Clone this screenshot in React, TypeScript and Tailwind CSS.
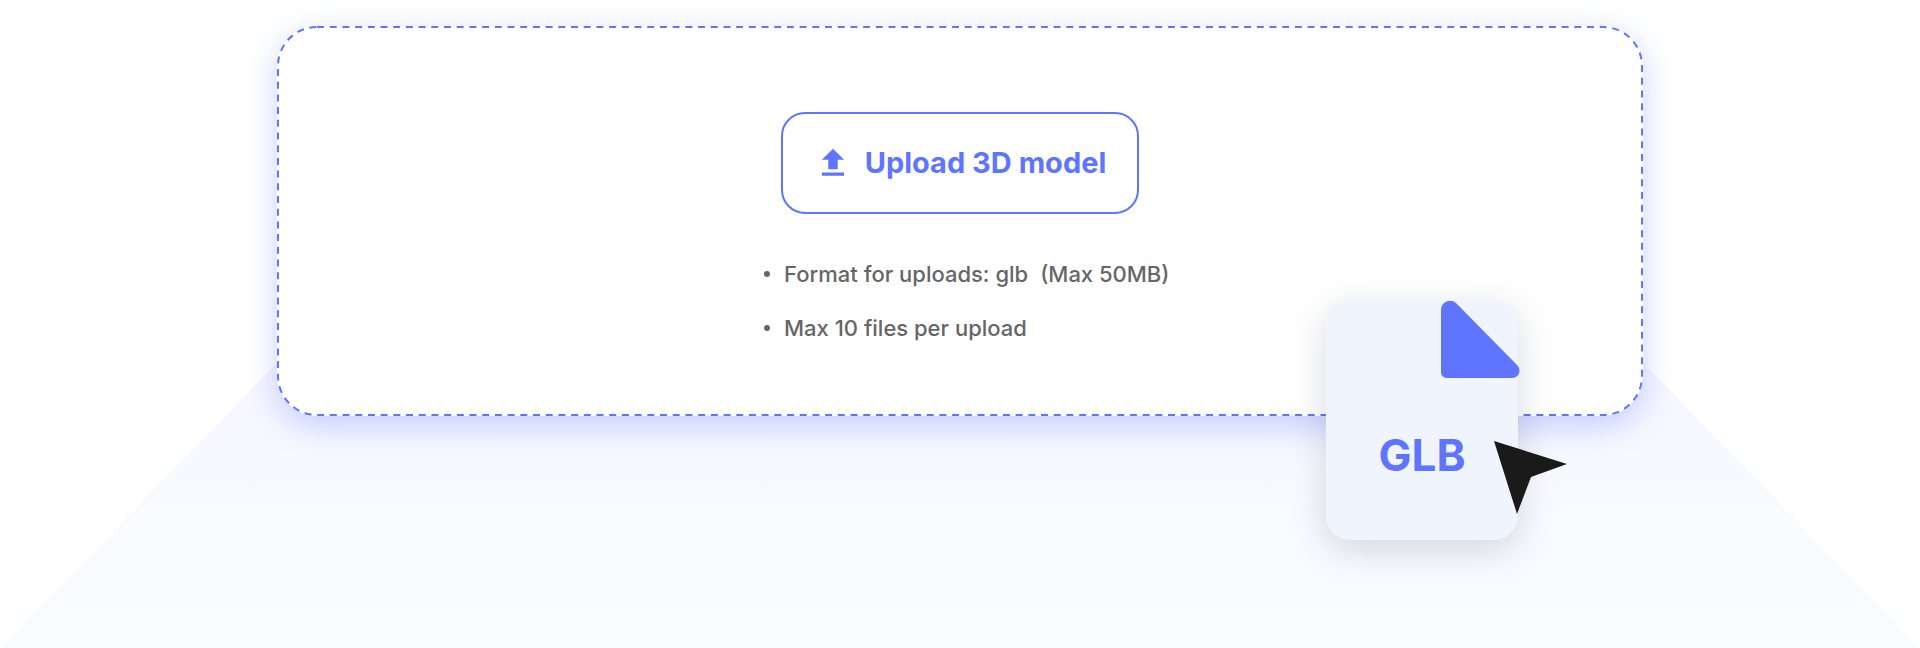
import React from 'react';

const font = { fontFamily: 'Inter, "Noto Sans", sans-serif' };

const FileBadge: React.FC = () => (
  <div className="absolute left-[1326px] top-[300px] w-[192px] h-[240px] rounded-[24px] bg-[#f0f4fd] shadow-[0_10px_36px_rgba(40,50,80,0.18)]">
    {/* folded corner */}
    <svg className="absolute left-[115px] top-0" width="79" height="78" viewBox="0 0 79 78">
      <path
        d="M0 10C0 2 9 -2 15 3L76 65C81 70 78 78 71 78H6C2.500 78 0 75.500 0 72Z"
        fill="#6075ff"
      />
    </svg>
    <span className="absolute left-0 right-0 top-[125px] text-center text-[44px] leading-[60px] font-bold text-[#6075ff]">
      GLB
    </span>
    {/* cursor */}
    <svg className="absolute left-[166px] top-[139px]" width="76" height="76" viewBox="0 0 76 76">
      <path d="M2 2L75 25L39 38L25 75Z" fill="#1a1a1a" />
    </svg>
  </div>
);

export default function App() {
  return (
    <div className="relative h-[648px] overflow-hidden bg-white" style={font}>
      {/* background fan behind the drop zone */}
      <svg className="absolute left-0 top-0" width="1920" height="648" viewBox="0 0 1920 648">
        <defs>
          <linearGradient id="fan" x1="0" y1="0" x2="0" y2="1">
            <stop offset="0" stopColor="#f5f6ff" />
            <stop offset="0.6" stopColor="#f8fbff" />
            <stop offset="1" stopColor="#f8fcff" />
          </linearGradient>
        </defs>
        <path d="M278 362H1642L1920 648H0Z" fill="url(#fan)" />
      </svg>

      <div className="relative pt-[26px]">
        <div className="relative mx-auto flex h-[390px] w-[1366px] flex-col items-center rounded-[40px] bg-white pt-[86px] shadow-[0_10px_32px_rgba(96,117,255,0.32)]">
          {/* dashed outline: longer dashes than a css dashed border gives */}
          <svg className="absolute left-0 top-0" width="1366" height="390" viewBox="0 0 1366 390" fill="none">
            <rect
              x="1"
              y="1"
              width="1364"
              height="388"
              rx="39"
              stroke="#6075ff"
              strokeWidth="2"
              strokeDasharray="7 5.700"
            />
          </svg>

          <button className="flex h-[102px] w-[358px] items-center justify-center gap-[13px] rounded-[24px] border-2 border-[#6075ff] text-[29px] font-bold text-[#6075ff]">
            <svg width="38" height="38" viewBox="0 0 24 24" fill="#6075ff">
              <path d="M9 16h6v-6h4l-7-7-7 7h4zm-4 2h14v2H5z" />
            </svg>
            Upload 3D model
          </button>

          <ul className="mt-[46px] flex w-[392px] flex-col gap-[26px] text-[22px] leading-[28px] font-medium whitespace-nowrap text-[#666666]">
            <li className="flex items-center gap-[14px]">
              <span className="h-[6px] w-[6px] shrink-0 rounded-full bg-[#666666]" />
              <span>Format for uploads: glb</span>
              <span className="-ml-[2px]">(Max 50MB)</span>
            </li>
            <li className="flex items-center gap-[14px]">
              <span className="h-[6px] w-[6px] shrink-0 rounded-full bg-[#666666]" />
              <span>Max 10 files per upload</span>
            </li>
          </ul>
        </div>
      </div>

      <FileBadge />
    </div>
  );
}
